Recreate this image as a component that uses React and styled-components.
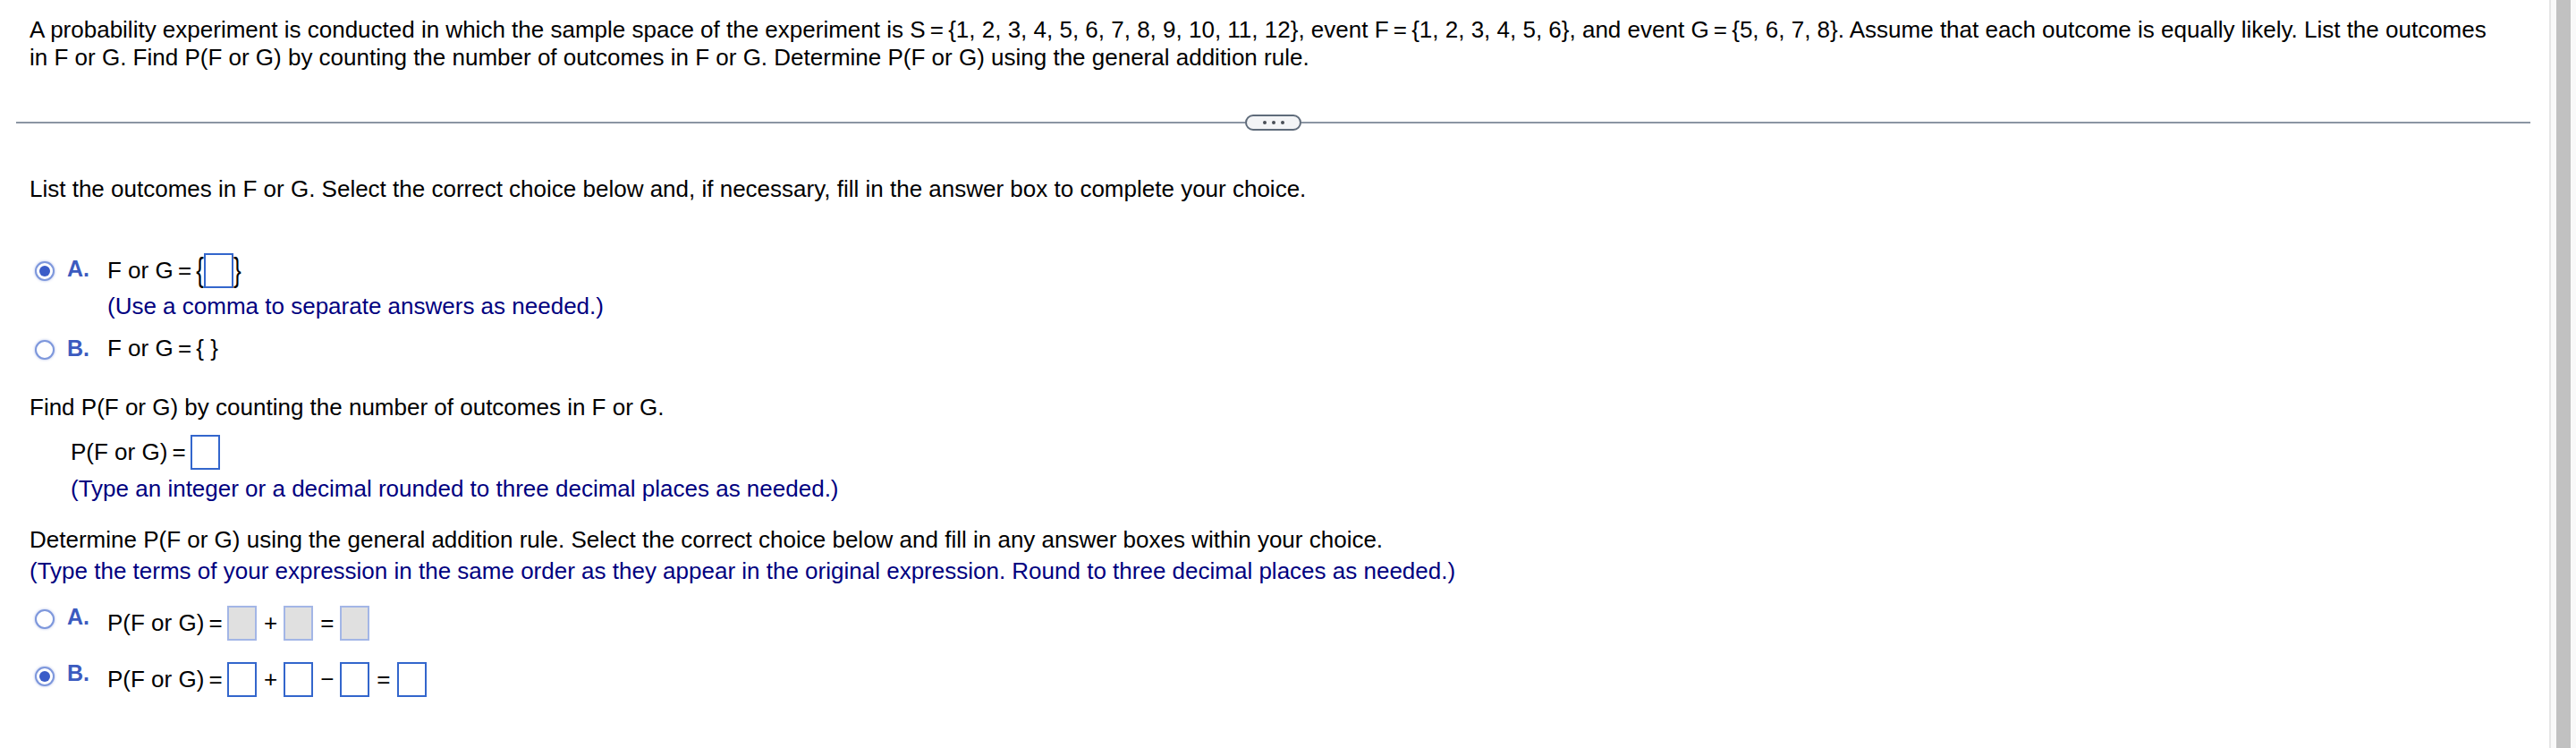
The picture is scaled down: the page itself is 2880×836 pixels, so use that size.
import React from 'react'
import styled, { createGlobalStyle } from 'styled-components'

const GlobalStyle = createGlobalStyle`
  html, body {
    margin: 0;
    padding: 0;
    background: #fff;
  }
  body {
    font-family: "Liberation Sans", Arial, sans-serif;
    color: #000;
  }
`

// thin space, used around "=" like the math renderer does
const T = '\u2009'

const question = `A probability experiment is conducted in which the sample space of the experiment is S${T}=${T}{1, 2, 3, 4, 5, 6, 7, 8, 9, 10, 11, 12}, event F${T}=${T}{1, 2, 3, 4, 5, 6}, and event G${T}=${T}{5, 6, 7, 8}. Assume that each outcome is equally likely. List the outcomes in F or G. Find P(F or G) by counting the number of outcomes in F or G. Determine P(F or G) using the general addition rule.`

export default function App() {
    return (
        <Page>
            <GlobalStyle />
            <Main>
                <Question>{question}</Question>

                <Divider>
                    <MoreButton aria-label="more">
                        <Dot /><Dot /><Dot />
                    </MoreButton>
                </Divider>

                <Body>
                    <Text>List the outcomes in F or G. Select the correct choice below and, if necessary, fill in the answer box to complete your choice.</Text>

                    <Choice $mt={56}>
                        <Radio $checked $top={9} />
                        <Letter $top={2}>A.</Letter>
                        <ChoiceBody>
                            <Expr>
                                {`F or G${T}=${T}`}<Brace>{'{'}</Brace><Box /><Brace>{'}'}</Brace>
                            </Expr>
                            <Text $hint $mt={5}>(Use a comma to separate answers as needed.)</Text>
                        </ChoiceBody>
                    </Choice>

                    <Choice $mt={16}>
                        <Radio $top={6} />
                        <Letter>B.</Letter>
                        <Expr>{`F or G${T}=${T}{ }`}</Expr>
                    </Choice>

                    <Text $mt={35}>Find P(F or G) by counting the number of outcomes in F or G.</Text>
                    <Expr $indent={46} $mt={15}>
                        {`P(F or G)${T}=${T}`}<Box />
                    </Expr>
                    <Text $hint $indent={46} $mt={6}>(Type an integer or a decimal rounded to three decimal places as needed.)</Text>

                    <Text $mt={26}>Determine P(F or G) using the general addition rule. Select the correct choice below and fill in any answer boxes within your choice.</Text>
                    <Text $hint $mt={4}>(Type the terms of your expression in the same order as they appear in the original expression. Round to three decimal places as needed.)</Text>

                    <Choice $mt={23}>
                        <Radio $top={4} />
                        <Letter $top={-3}>A.</Letter>
                        <Expr>
                            {`P(F or G)${T}=${T}`}<Box $disabled />
                            <Op>+</Op><Box $disabled />
                            <Op>=</Op><Box $disabled />
                        </Expr>
                    </Choice>

                    <Choice $mt={24}>
                        <Radio $checked $top={5} />
                        <Letter $top={-3}>B.</Letter>
                        <Expr>
                            {`P(F or G)${T}=${T}`}<Box />
                            <Op>+</Op><Box />
                            <Op>−</Op><Box />
                            <Op>=</Op><Box />
                        </Expr>
                    </Choice>
                </Body>
            </Main>
            <Scrollbar>
                <Thumb />
            </Scrollbar>
        </Page>
    )
}

const Page = styled.div`
    display: flex;
    height: 836px;
    overflow: hidden;
`

const Main = styled.main`
    flex: 1;
    min-width: 0;
    padding: 18px 21px 0 18px;
    font-size: 26px;
    line-height: 31px;
`

const Question = styled.p`
    margin: 0;
    padding: 0 40px 0 15px;
`

const Divider = styled.div`
    display: flex;
    align-items: center;
    margin-top: 48px;
    &::before, &::after {
        content: '';
        flex: 1;
        height: 2px;
        background: #8b95a3;
    }
`

const MoreButton = styled.button`
    display: flex;
    align-items: center;
    justify-content: center;
    gap: 6px;
    box-sizing: border-box;
    width: 63px;
    height: 18px;
    padding: 0;
    border: 2px solid #5f6b7a;
    border-radius: 9px;
    background: #f3f4f6;
`

const Dot = styled.span`
    width: 4px;
    height: 4px;
    border-radius: 50%;
    background: #4a4f57;
`

const Body = styled.section`
    padding-left: 15px;
    margin-top: 50px;
`

const Text = styled.p`
    margin: ${p => p.$mt || 0}px 0 0 ${p => p.$indent || 0}px;
    color: ${p => p.$hint ? '#00007f' : '#000'};
`

const Choice = styled.div`
    display: flex;
    align-items: flex-start;
    margin-top: ${p => p.$mt || 0}px;
`

const Radio = styled.span`
    flex: none;
    display: flex;
    align-items: center;
    justify-content: center;
    box-sizing: border-box;
    width: 22px;
    height: 22px;
    margin: ${p => p.$top || 0}px 14px 0 6px;
    border: 2px solid #7d97dc;
    border-radius: 50%;
    background: #fff;
    box-shadow: 0 0 3px rgba(70, 100, 200, 0.45);
    &::after {
        content: '';
        display: ${p => p.$checked ? 'block' : 'none'};
        width: 12px;
        height: 12px;
        border-radius: 50%;
        background: #3a5cc8;
    }
`

const Letter = styled.span`
    flex: none;
    width: 45px;
    margin-top: ${p => p.$top || 0}px;
    font-size: 25px;
    font-weight: bold;
    color: #3c5bbf;
`

const ChoiceBody = styled.div`
    display: flex;
    flex-direction: column;
`

const Expr = styled.div`
    display: flex;
    align-items: center;
    white-space: pre;
    margin: ${p => p.$mt || 0}px 0 0 ${p => p.$indent || 0}px;
`

const Box = styled.span`
    flex: none;
    box-sizing: border-box;
    width: 33px;
    height: 39px;
    border: 2px solid ${p => p.$disabled ? '#a3b6e6' : '#3366cc'};
    background: ${p => p.$disabled ? '#e0e0e0' : '#fff'};
`

const Op = styled.span`
    padding: 0 7px 0 8px;
`

const Brace = styled.span`
    display: inline-block;
    transform: scaleY(1.4);
`

const Scrollbar = styled.div`
    flex: none;
    display: flex;
    box-sizing: border-box;
    width: 30px;
    padding: 0 6px;
    border-left: 2px solid #e6e6e6;
    background: #f9f9f9;
`

const Thumb = styled.div`
    flex: 1;
    background: #c1c1c1;
`
